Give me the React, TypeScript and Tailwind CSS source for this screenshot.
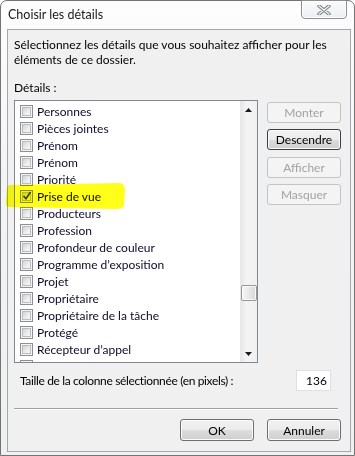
const items = [
  "Personnes",
  "Pièces jointes",
  "Prénom",
  "Prénom",
  "Priorité",
  "Prise de vue",
  "Producteurs",
  "Profession",
  "Profondeur de couleur",
  "Programme d’exposition",
  "Projet",
  "Propriétaire",
  "Propriétaire de la tâche",
  "Protégé",
  "Récepteur d’appel",
  "",
];

function CheckBox({ checked }: { checked?: boolean }) {
  return (
    <div className="w-[13px] h-[13px] shrink-0 border border-[#8e8f8f] bg-[#f4f4f4] p-[1px]">
      <div className="relative w-full h-full border border-[#b9bdc3] bg-[linear-gradient(135deg,#d0d3d7_0%,#eceded_60%,#f8f8f8_100%)]">
        {checked && (
          <svg className="absolute -left-[1px] -top-[2px]" width="10" height="10" viewBox="0 0 10 10">
            <path d="M1.5 5 L4 7.8 L8.5 1" fill="none" stroke="#3a3a3a" strokeWidth="1.6" />
          </svg>
        )}
      </div>
    </div>
  );
}

function Btn({ label, disabled, focused, className = "" }: { label: string; disabled?: boolean; focused?: boolean; className?: string }) {
  if (disabled) {
    return (
      <div className={`w-[74px] h-[21px] rounded-[3px] border border-[#c2c4c6] bg-[#f4f4f4] flex items-center justify-center text-[#a2a2a2] ${className}`}>
        {label}
      </div>
    );
  }
  return (
    <div
      className={`w-[74px] h-[21px] rounded-[3px] border ${focused ? "border-[#3e3e3e]" : "border-[#707070]"} bg-[linear-gradient(to_bottom,#f2f2f2_0%,#ebebeb_50%,#dddddd_50%,#cfcfcf_100%)] shadow-[inset_0_0_0_1px_#fbfbfb] flex items-center justify-center text-black ${className}`}
    >
      {label}
    </div>
  );
}

export default function App() {
  return (
    <div
      className="relative w-[355px] h-[456px] bg-white text-[12px] leading-[15px] text-black whitespace-nowrap"
      style={{ fontFamily: 'Lato, "Noto Sans", sans-serif' }}
    >
      {/* window frame */}
      <div className="w-full h-full flex flex-col rounded-t-[7px] border border-[#737373] bg-[linear-gradient(to_bottom,#fdfdfd_0%,#f3f4f6_40%,#eef0f2_100%)]">
        {/* title bar */}
        <div className="relative h-[28px] shrink-0 pl-[7px] pb-[1px] flex items-center text-[12.5px] text-[#1a1a1a]">
          Choisir les détails
          <div className="absolute right-[7px] -top-[1px] w-[46px] h-[19px] rounded-b-[4px] border border-[#8d8f93] bg-[linear-gradient(to_bottom,#fbfbfb,#eceef1)] shadow-[inset_0_0_0_1px_#ffffff] flex items-center justify-center">
            <svg width="14" height="10" viewBox="0 0 14 10">
              <path d="M2 1 L12 9 M12 1 L2 9" stroke="#7c7f85" strokeWidth="3.4" strokeLinecap="round" />
              <path d="M2 1 L12 9 M12 1 L2 9" stroke="#f4f5f6" strokeWidth="1.4" strokeLinecap="round" />
            </svg>
          </div>
        </div>

        {/* content panel */}
        <div className="flex-1 ml-[6px] mr-[3px] mb-[3px] border border-[#a5a7aa] bg-[#f0f0f0] flex flex-col">
          <p className="pl-[6px] pt-[7px]">
            Sélectionnez les détails que vous souhaitez afficher pour les
            <br />
            éléments de ce dossier.
          </p>
          <p className="pl-[6px] mt-[13px]">Détails :</p>

          <div className="flex mt-[5px] pl-[6px]">
            {/* list box */}
            <div className="w-[244px] h-[263px] border border-[#828790] bg-white flex">
              <div className="flex-1 overflow-hidden pt-[2px]">
                {items.map((name, i) => (
                  <div key={i} className="h-[17px] flex items-center pl-[5px] gap-[4px] text-[#0c0c2a]">
                    <CheckBox checked={name === "Prise de vue"} />
                    {name && <span>{name}</span>}
                  </div>
                ))}
              </div>
              {/* scrollbar */}
              <div className="w-[17px] flex flex-col bg-[linear-gradient(to_right,#e6e6e6,#f4f4f4_40%,#f0f0f0)]">
                <div className="h-[17px] flex items-center justify-center">
                  <svg width="7" height="4" viewBox="0 0 7 4">
                    <path d="M3.5 0 L7 4 L0 4 Z" fill="#1a1a1a" />
                  </svg>
                </div>
                <div className="mt-[167px] mx-auto w-[16px] h-[16px] rounded-[2px] border border-[#979797] bg-[linear-gradient(to_right,#f6f6f6,#e8e8e8_50%,#d6d6d6)] shadow-[inset_0_0_0_1px_#fafafa]" />
                <div className="flex-1" />
                <div className="h-[17px] flex items-center justify-center">
                  <svg width="7" height="4" viewBox="0 0 7 4">
                    <path d="M0 0 L7 0 L3.5 4 Z" fill="#1a1a1a" />
                  </svg>
                </div>
              </div>
            </div>

            {/* side buttons */}
            <div className="ml-[9px] pt-[2px] flex flex-col">
              <Btn label="Monter" disabled />
              <Btn label="Descendre" focused className="mt-[6px]" />
              <Btn label="Afficher" disabled className="mt-[7px]" />
              <Btn label="Masquer" disabled className="mt-[6px]" />
            </div>
          </div>

          <div className="flex items-center mt-[7px] pl-[12px] pr-[19px]">
            <span className="flex-1 tracking-[-0.35px]">Taille de la colonne sélectionnée (en pixels) :</span>
            <div className="w-[35px] h-[21px] border border-[#dcdfe3] bg-white flex items-center justify-end pr-[3px]">
              136
            </div>
          </div>

          <div className="mt-[17px] ml-[6px] w-[324px] h-[2px] border-t border-[#a0a0a0] border-b-white border-b" />

          <div className="flex justify-end gap-[13px] mt-[9px] pr-[9px]">
            <Btn label="OK" className="h-[22px]" />
            <Btn label="Annuler" className="h-[22px]" />
          </div>
        </div>
      </div>

      {/* yellow highlighter mark */}
      <svg className="absolute left-0 top-0 pointer-events-none mix-blend-multiply" width="355" height="456">
        <path d="M10 185 L120 183 Q125 184 125 190 L124 206 Q122 209 116 209 L8 207 Q5 206 6 199 L7 189 Q7 185 10 185 Z" fill="#ffff1a" />
      </svg>
    </div>
  );
}
